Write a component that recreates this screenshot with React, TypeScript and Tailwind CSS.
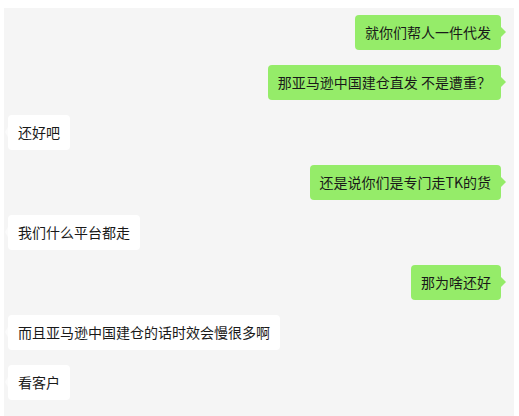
import React from "react";

type Msg = { side: "l" | "r"; text: string };

const msgs: Msg[] = [
  { side: "r", text: "就你们帮人一件代发" },
  { side: "r", text: "那亚马逊中国建仓直发 不是遭重？" },
  { side: "l", text: "还好吧" },
  { side: "r", text: "还是说你们是专门走TK的货" },
  { side: "l", text: "我们什么平台都走" },
  { side: "r", text: "那为啥还好" },
  { side: "l", text: "而且亚马逊中国建仓的话时效会慢很多啊" },
  { side: "l", text: "看客户" },
];

function Bubble({ m }: { m: Msg }) {
  if (m.side === "r") {
    return (
      <div className="flex justify-end pr-[13px]">
        <div className="relative h-[35px] rounded-[4px] bg-[#95ec69] px-[10px] text-[14px] leading-[35px] text-[#191919] whitespace-nowrap">
          {m.text}
          <div className="absolute right-[-5px] top-[12px] h-0 w-0 border-y-[5px] border-l-[5px] border-y-transparent border-l-[#95ec69]" />
        </div>
      </div>
    );
  }
  return (
    <div className="flex justify-start pl-[4px]">
      <div className="relative h-[35px] rounded-[4px] bg-white px-[10px] text-[14px] leading-[35px] text-[#191919] whitespace-nowrap">
        {m.text}
        <div className="absolute left-[-3px] top-[12px] h-0 w-0 border-y-[5px] border-r-[3px] border-y-transparent border-r-[#fbfbfb]" />
      </div>
    </div>
  );
}

export default function App() {
  return (
    <div
      className="w-[519px] h-[416px] bg-white pt-[8px] pl-[4px] pr-[5px]"
      style={{ fontFamily: '"Noto Sans CJK SC", "Noto Sans", sans-serif' }}
    >
      <div className="h-full bg-[#f5f5f5] pt-[7px] flex flex-col gap-[15px]">
        {msgs.map((m, i) => (
          <Bubble key={i} m={m} />
        ))}
      </div>
    </div>
  );
}
